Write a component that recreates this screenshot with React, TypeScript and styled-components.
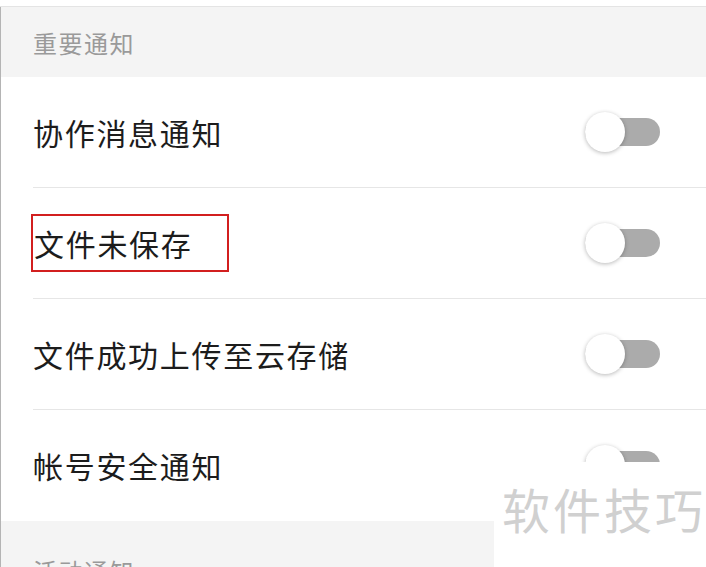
import React from 'react';
import styled, { createGlobalStyle } from 'styled-components';

const GlobalStyle = createGlobalStyle`
  html, body {
    margin: 0;
    padding: 0;
    background: #ffffff;
    overflow: hidden;
  }
  body {
    font-family: "Noto Sans CJK SC", "Noto Sans", sans-serif;
  }
`;

const items = ['协作消息通知', '文件未保存', '文件成功上传至云存储', '帐号安全通知'];

export default function App() {
    return (
        <>
            <GlobalStyle />
            <Screen>
                <TopStrip />
                <Body>
                    <SectionHeader>重要通知</SectionHeader>
                    <List>
                        {items.map((item, index) => (
                            <Row key={index} last={index === items.length - 1}>
                                <Label marked={index === 1}>{item}</Label>
                                <Toggle>
                                    <Knob />
                                </Toggle>
                            </Row>
                        ))}
                    </List>
                    <SectionHeader lower>活动通知</SectionHeader>
                </Body>
                <Watermark>软件技巧</Watermark>
            </Screen>
        </>
    );
}

const Screen = styled.div`
    position: relative;
    width: 706px;
    height: 567px;
    overflow: hidden;
    background: #ffffff;
`
const TopStrip = styled.div`
    height: 6px;
    background: #ffffff;
    border-bottom: 1px solid #e4e4e4;
`
const Body = styled.div`
    border-left: 1px solid #b4b4b4;
`
const SectionHeader = styled.div<{ lower?: boolean }>`
    height: 70px;
    display: flex;
    align-items: center;
    padding-left: 32px;
    padding-top: ${props => props.lower ? '14px' : '0'};
    background: #f4f4f4;
    color: #9a9a9a;
    font-size: 24px;
    letter-spacing: 1.5px;
`
const List = styled.div`
    background: #ffffff;
`
const Row = styled.div<{ last: boolean }>`
    height: 110px;
    margin-left: 32px;
    padding-right: 46px;
    display: flex;
    align-items: center;
    justify-content: space-between;
    border-bottom: 1px solid ${props => props.last ? 'transparent' : '#e6e6e6'};
`
const Label = styled.span<{ marked: boolean }>`
    font-size: 30px;
    letter-spacing: 1.7px;
    color: #1c1c1c;
    line-height: 1;
    padding: ${props => props.marked ? '12px 34px 12px 1px' : '14px 0'};
    margin-left: ${props => props.marked ? '-2px' : '0'};
    border: ${props => props.marked ? '2px solid #d21f1f' : 'none'};
`
const Toggle = styled.div`
    position: relative;
    width: 75px;
    height: 28px;
    border-radius: 14px;
    background: #ababab;
`
const Knob = styled.div`
    position: absolute;
    left: 0;
    top: 50%;
    width: 40px;
    height: 40px;
    border-radius: 50%;
    background: #ffffff;
    transform: translateY(-50%);
    box-shadow: 0 1px 4px rgba(0, 0, 0, 0.28);
`
const Watermark = styled.div`
    position: absolute;
    left: 494px;
    top: 462px;
    width: 212px;
    height: 105px;
    background: #ffffff;
    color: #d0d0d0;
    font-size: 48px;
    letter-spacing: 3px;
    padding: 22px 0 0 8px;
    box-sizing: border-box;
    line-height: 1;
    white-space: nowrap;
`
